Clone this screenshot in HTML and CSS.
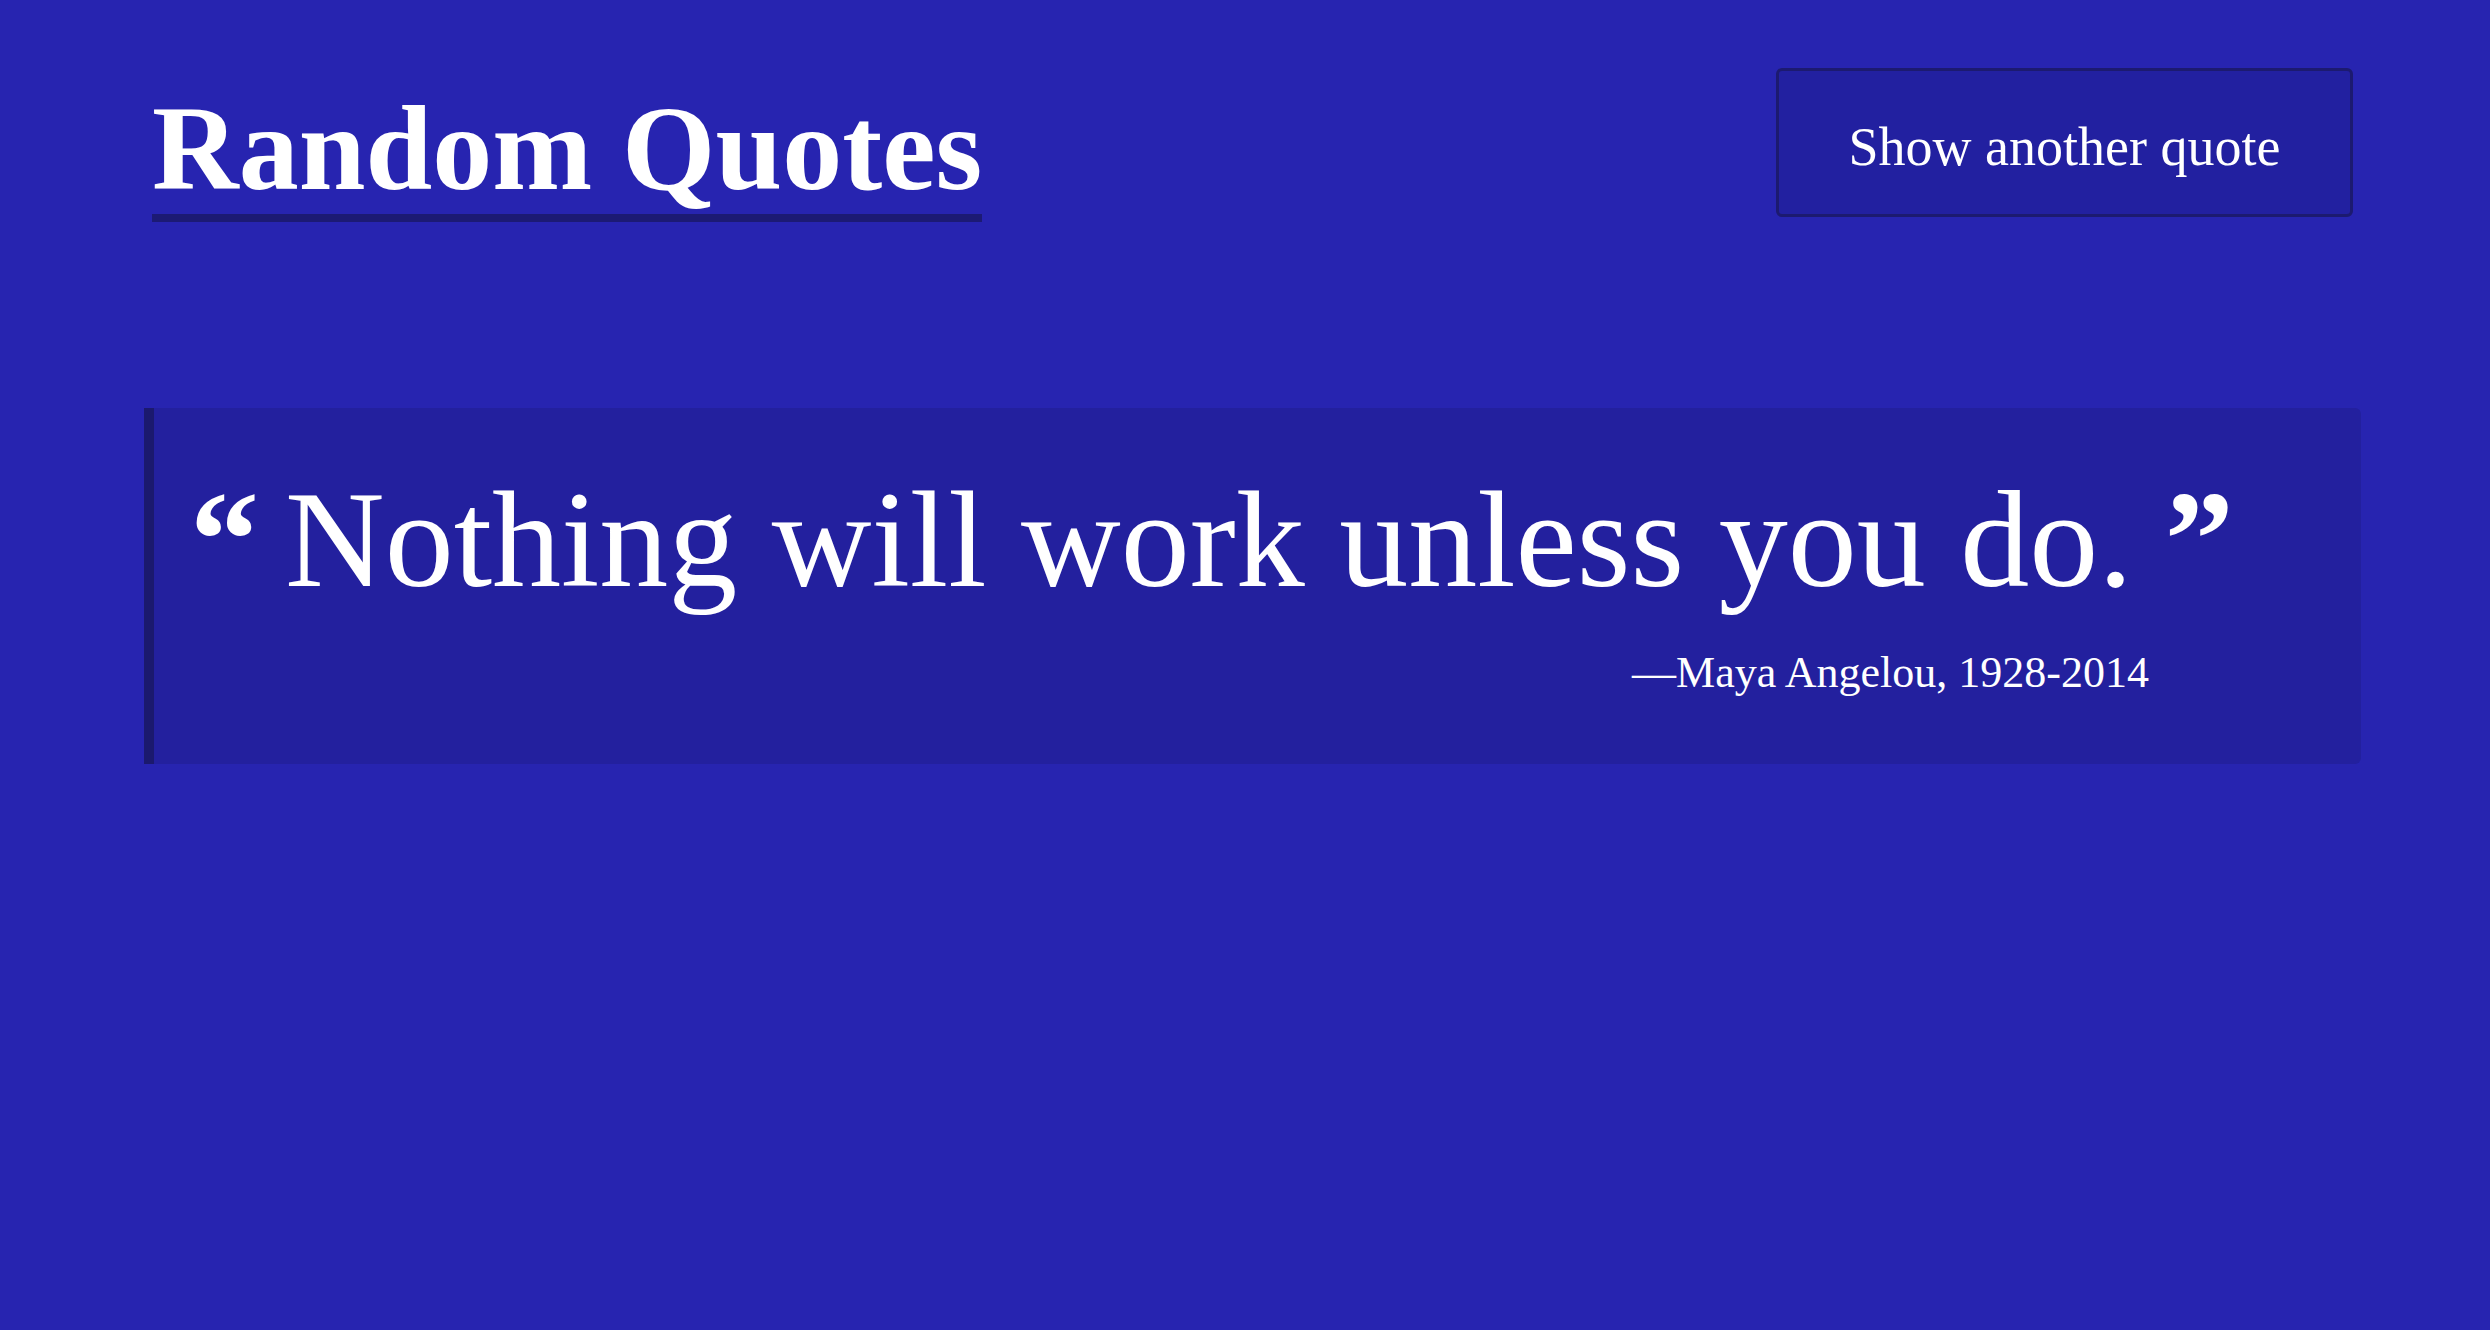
FILE: index.html
```html
<!DOCTYPE html>
<html lang="en">
<head>
<meta charset="utf-8">
<title>Random Quotes</title>
<link rel="stylesheet" href="styles.css">
</head>
<body>
<main class="page">
  <header class="header">
    <h1 class="title">Random Quotes</h1>
    <button class="btn" type="button">Show another quote</button>
  </header>
  <blockquote class="card">
    <p class="quote"><span class="mark mark-open">“</span>Nothing will work unless you do.<span class="mark mark-close">”</span></p>
    <footer class="cite">—Maya Angelou, 1928-2014</footer>
  </blockquote>
</main>
</body>
</html>
```

FILE: styles.css
```css
html, body {
  margin: 0;
  padding: 0;
}

body {
  background: #2724b0;
  min-height: 100vh;
  color: #ffffff;
  font-family: "Liberation Serif", "Times New Roman", serif;
}

.page {
  margin-left: 144px;
  width: 2217px;
}

.header {
  display: flex;
  justify-content: space-between;
  align-items: flex-start;
  padding: 68px 8px 0 8px;
}

.title {
  margin: 16px 0 0 0;
  font-size: 120px;
  font-weight: 700;
  line-height: 130px;
  border-bottom: 8px solid #1c1a74;
  color: #ffffff;
}

.btn {
  box-sizing: border-box;
  width: 577px;
  height: 149px;
  padding: 8px 0 0 0;
  border: 3px solid #1c1a70;
  border-radius: 6px;
  background: #2220a0;
  color: #ffffff;
  font-family: "Liberation Serif", "Times New Roman", serif;
  font-size: 54px;
  line-height: 60px;
  cursor: pointer;
}

.card {
  margin: 186px 0 0 0;
  padding: 52px 36px 66px 36px;
  background: #23209e;
  border-left: 10px solid #1b196e;
  border-radius: 0 6px 6px 0;
}

.quote {
  margin: 0;
  font-size: 138px;
  line-height: 159px;
  white-space: nowrap;
}

.mark {
  font-weight: 700;
}

.mark-open {
  margin-right: 26px;
}

.mark-close {
  margin-left: 32px;
}

.cite {
  margin-top: 28px;
  padding-right: 176px;
  text-align: right;
  font-size: 44px;
  line-height: 51px;
}
```
